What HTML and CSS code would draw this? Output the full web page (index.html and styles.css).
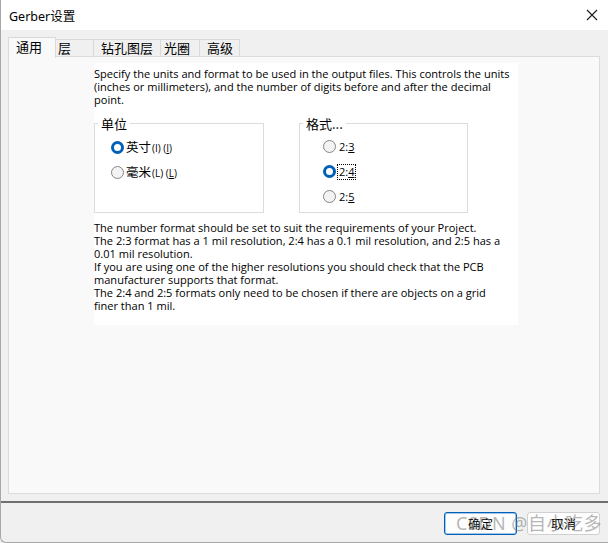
FILE: index.html
```html
<!DOCTYPE html>
<html>
<head>
<meta charset="utf-8">
<link rel="stylesheet" href="styles.css">
</head>
<body>
<div class="window">
  <div class="titlebar">
    <span class="title">Gerber设置</span>
    <svg class="close" width="12" height="12" viewBox="0 0 12 12"><path d="M1 1L11 11M11 1L1 11" stroke="#1a1a1a" stroke-width="1.1" fill="none"/></svg>
  </div>
  <div class="body">
    <div class="tabs">
      <div class="tab active t1">通用</div>
      <div class="tab t2">层</div>
      <div class="tab t3">钻孔图层</div>
      <div class="tab t4">光圈</div>
      <div class="tab t5">高级</div>
    </div>
    <div class="panel">
      <div class="content">
        <p class="para">Specify the units and format to be used in the output files. This controls the units<br>(inches or millimeters), and the number of digits before and after the decimal<br>point.</p>
        <div class="groups">
          <fieldset class="group">
            <legend>单位</legend>
            <div class="opts">
              <div class="opt"><span class="radio on"></span><span class="lbl">英寸<small>(I) (<u>I</u>)</small></span></div>
              <div class="opt"><span class="radio"></span><span class="lbl">毫米<small>(L) (<u>L</u>)</small></span></div>
            </div>
          </fieldset>
          <fieldset class="group fmt">
            <legend>格式...</legend>
            <div class="opts">
              <div class="opt"><span class="radio"></span><span class="lbl num">2:<u>3</u></span></div>
              <div class="opt"><span class="radio on"></span><span class="lbl num focus">2:<u>4</u></span></div>
              <div class="opt"><span class="radio"></span><span class="lbl num">2:<u>5</u></span></div>
            </div>
          </fieldset>
        </div>
        <p class="para notes">The number format should be set to suit the requirements of your Project.<br>The 2:3 format has a 1 mil resolution, 2:4 has a 0.1 mil resolution, and 2:5 has a<br>0.01 mil resolution.<br>If you are using one of the higher resolutions you should check that the PCB<br>manufacturer supports that format.<br>The 2:4 and 2:5 formats only need to be chosen if there are objects on a grid<br>finer than 1 mil.</p>
      </div>
    </div>
  </div>
  <div class="footer">
    <button class="btn primary">确定</button>
    <button class="btn">取消</button>
  </div>
  <div class="watermark">CSDN @自小吃多</div>
</div>
</body>
</html>
```
FILE: styles.css
```css
html, body {
  margin: 0;
  padding: 0;
}
body {
  width: 608px;
  height: 543px;
  overflow: hidden;
  background: #f0f0f0;
  font-family: "Open Sans", "Noto Sans CJK SC", sans-serif;
  color: #000;
}
.window {
  position: relative;
  width: 608px;
  height: 543px;
  box-sizing: border-box;
  border-left: 1px solid #a8a8a8;
  border-bottom: 1px solid #a8a8a8;
  border-bottom-left-radius: 6px;
  display: flex;
  flex-direction: column;
  background: #f0f0f0;
}
.titlebar {
  height: 30px;
  background: #ffffff;
  display: flex;
  align-items: center;
  justify-content: space-between;
  padding: 0 10px 0 8px;
  flex: none;
}
.title {
  font-size: 12.5px;
  font-family: "Noto Sans", "Noto Sans CJK SC", sans-serif;
}
.body {
  padding: 7px 7px 0 7px;
  flex: none;
}
.tabs {
  display: flex;
  height: 19px;
  align-items: flex-end;
  position: relative;
  z-index: 1;
}
.tab {
  box-sizing: border-box;
  height: 17px;
  border: 1px solid #d9d9d9;
  border-bottom: none;
  border-left: none;
  background: #f0f0f0;
  font-family: "Noto Sans CJK SC", sans-serif;
  font-size: 13px;
  line-height: 16px;
  padding-left: 7px;
}
.tab.active {
  height: 21px;
  margin-bottom: -2px;
  background: #f9f9f9;
  border-left: 1px solid #d9d9d9;
  padding-top: 1px;
}
.t1 { width: 48px; }
.t2 { width: 38px; padding-left: 2px; }
.t3 { width: 67px; }
.t4 { width: 39px; padding-left: 3px; }
.t5 { width: 40px; }
.panel {
  box-sizing: border-box;
  height: 438px;
  border: 1px solid #dcdcdc;
  background: #f9f9f9;
  margin-right: 1px;
  padding: 6px 0 0 85px;
}
.content {
  width: 424px;
  height: 262px;
  background: #ffffff;
  font-size: 11.05px;
  line-height: 13px;
}
.para {
  margin: 0;
  padding-top: 4px;
}
.notes {
  padding-top: 0;
  margin-top: 8px;
}
.groups {
  display: flex;
  gap: 35px;
  margin-top: 10px;
}
.group {
  box-sizing: border-box;
  width: 170px;
  height: 97px;
  margin: 0;
  padding: 0;
  border: 1px solid #dcdcdc;
}
.group.fmt {
  width: 169px;
}
.group legend {
  font-family: "Noto Sans CJK SC", sans-serif;
  font-size: 13px;
  line-height: 15px;
  padding: 0 3px;
  margin-left: 3px;
}
.opts {
  display: flex;
  flex-direction: column;
  padding: 4px 0 0 16px;
}
.fmt .opts {
  padding: 3px 0 0 23px;
}
.opt {
  display: flex;
  align-items: center;
  height: 25px;
  gap: 2px;
}
.radio {
  box-sizing: border-box;
  width: 13px;
  height: 13px;
  border-radius: 50%;
  border: 1px solid #858585;
  background: #f3f3f3;
  flex: none;
}
.radio.on {
  border: 3.5px solid #005fb8;
  background: #ffffff;
}
.lbl {
  font-family: "Noto Sans CJK SC", sans-serif;
  font-size: 12.5px;
  line-height: 14px;
}
.lbl small {
  font-family: "Open Sans", sans-serif;
  font-size: 10px;
  margin-left: 1px;
}
.lbl.num {
  font-family: "Open Sans", sans-serif;
  font-size: 11px;
  padding: 0 1px;
}
.lbl.focus {
  outline: 1px dotted #000;
  outline-offset: 0;
}
.footer {
  flex: 1;
  margin-top: 7px;
  border-top: 2px solid #6f6f6f;
  display: flex;
  justify-content: flex-end;
  align-items: flex-start;
  gap: 10px;
  padding: 9px 8px 0 0;
}
.btn {
  box-sizing: border-box;
  width: 73px;
  height: 23px;
  background: #fdfdfd;
  border: 1px solid #d0d0d0;
  border-radius: 3px;
  font-family: "Noto Sans CJK SC", sans-serif;
  font-size: 12.5px;
  padding: 0;
  color: #000;
}
.btn.primary {
  border: 1px solid #005fb8;
  box-shadow: inset 0 0 0 0.5px #4a8fd6;
}
.watermark {
  position: absolute;
  left: 455px;
  top: 511px;
  font-family: "Noto Sans", "Noto Sans CJK SC", sans-serif;
  font-size: 18px;
  line-height: 24px;
  color: rgba(120, 120, 120, 0.55);
  letter-spacing: 0.5px;
  pointer-events: none;
}
```
